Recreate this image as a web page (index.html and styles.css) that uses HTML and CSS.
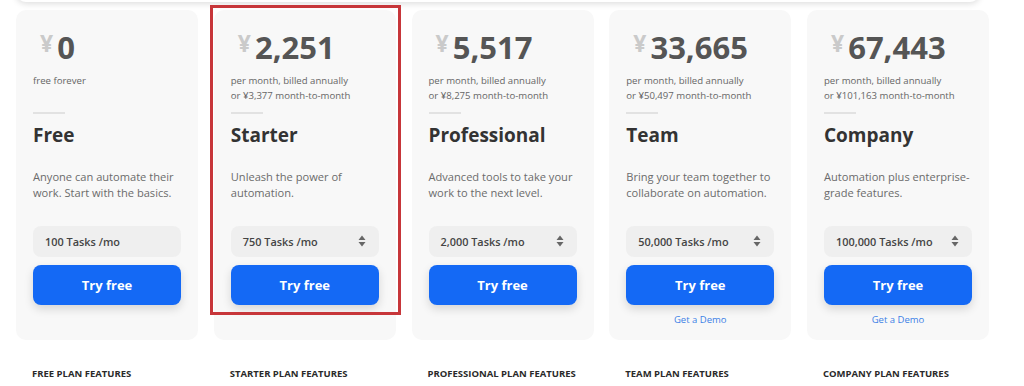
FILE: index.html
```html
<!DOCTYPE html>
<html lang="en">
<head>
<meta charset="utf-8">
<title>Pricing</title>
<link rel="stylesheet" href="styles.css">
</head>
<body>
<div class="top-strip"></div>
<div class="plans">
  <div class="card">
    <div class="price"><span class="cur">¥</span><span class="amt">0</span></div>
    <div class="sub">free forever</div>
    <div class="rule"></div>
    <h2 class="name">Free</h2>
    <p class="desc">Anyone can automate their work. Start with the basics.</p>
    <div class="select"><span>100 Tasks /mo</span></div>
    <a class="btn">Try free</a>
  </div>
  <div class="card highlighted">
    <div class="price"><span class="cur">¥</span><span class="amt">2,251</span></div>
    <div class="sub">per month, billed annually<br>or ¥3,377 month-to-month</div>
    <div class="rule"></div>
    <h2 class="name">Starter</h2>
    <p class="desc">Unleash the power of automation.</p>
    <div class="select"><span>750 Tasks /mo</span><svg class="arrows" width="8" height="12" viewBox="0 0 8 12"><path d="M4 0.5 L7.5 5 H0.5 Z M4 11.5 L7.5 7 H0.5 Z" fill="#666"/></svg></div>
    <a class="btn">Try free</a>
    <div class="outline"></div>
  </div>
  <div class="card">
    <div class="price"><span class="cur">¥</span><span class="amt">5,517</span></div>
    <div class="sub">per month, billed annually<br>or ¥8,275 month-to-month</div>
    <div class="rule"></div>
    <h2 class="name">Professional</h2>
    <p class="desc">Advanced tools to take your work to the next level.</p>
    <div class="select"><span>2,000 Tasks /mo</span><svg class="arrows" width="8" height="12" viewBox="0 0 8 12"><path d="M4 0.5 L7.5 5 H0.5 Z M4 11.5 L7.5 7 H0.5 Z" fill="#666"/></svg></div>
    <a class="btn">Try free</a>
  </div>
  <div class="card">
    <div class="price"><span class="cur">¥</span><span class="amt">33,665</span></div>
    <div class="sub">per month, billed annually<br>or ¥50,497 month-to-month</div>
    <div class="rule"></div>
    <h2 class="name">Team</h2>
    <p class="desc">Bring your team together to collaborate on automation.</p>
    <div class="select"><span>50,000 Tasks /mo</span><svg class="arrows" width="8" height="12" viewBox="0 0 8 12"><path d="M4 0.5 L7.5 5 H0.5 Z M4 11.5 L7.5 7 H0.5 Z" fill="#666"/></svg></div>
    <a class="btn">Try free</a>
    <a class="demo">Get a Demo</a>
  </div>
  <div class="card">
    <div class="price"><span class="cur">¥</span><span class="amt">67,443</span></div>
    <div class="sub">per month, billed annually<br>or ¥101,163 month-to-month</div>
    <div class="rule"></div>
    <h2 class="name">Company</h2>
    <p class="desc">Automation plus enterprise-grade features.</p>
    <div class="select"><span>100,000 Tasks /mo</span><svg class="arrows" width="8" height="12" viewBox="0 0 8 12"><path d="M4 0.5 L7.5 5 H0.5 Z M4 11.5 L7.5 7 H0.5 Z" fill="#666"/></svg></div>
    <a class="btn">Try free</a>
    <a class="demo">Get a Demo</a>
  </div>
</div>
<div class="features">
  <h3>Free plan features</h3>
  <h3>Starter plan features</h3>
  <h3>Professional plan features</h3>
  <h3>Team plan features</h3>
  <h3>Company plan features</h3>
</div>
</body>
</html>
```
FILE: styles.css
```css
* { box-sizing: border-box; }
html, body { margin: 0; padding: 0; background: #fff; }
body {
  font-family: "Open Sans", "Liberation Sans", sans-serif;
  color: #333;
  overflow: hidden;
}
.top-strip {
  height: 20px;
  margin: -18px 44px 0 16px;
  background: #fff;
  border-radius: 0 0 10px 10px;
  box-shadow: 0 2px 6px rgba(0, 0, 0, 0.13);
}
.plans {
  display: grid;
  grid-template-columns: repeat(5, 182px);
  column-gap: 15.75px;
  padding: 8px 0 0 16px;
}
.card {
  position: relative;
  display: flex;
  flex-direction: column;
  background: #f8f8f8;
  border-radius: 10px;
  padding: 19px 17px 13px 17px;
}
.price {
  display: flex;
  align-items: flex-start;
  height: 36px;
  line-height: 36px;
  margin-left: 7px;
}
.cur {
  font-size: 23px;
  font-weight: 700;
  color: #cacaca;
  line-height: 22px;
  margin-top: 3px;
  margin-right: 4px;
}
.amt {
  font-size: 31px;
  font-weight: 700;
  color: #555;
}
.sub {
  margin-top: 7.5px;
  height: 30px;
  font-size: 9.6px;
  line-height: 15px;
  color: #666;
}
.rule {
  width: 32px;
  height: 2px;
  background: #e2e2e2;
  margin-top: 9px;
}
.name {
  margin: 8.5px 0 0;
  font-size: 19px;
  line-height: 26px;
  font-weight: 700;
  color: #333;
}
.desc {
  margin: 21px 0 0;
  height: 32px;
  font-size: 11.1px;
  line-height: 16px;
  color: #6b6b6b;
}
.select {
  margin-top: 24.5px;
  height: 31px;
  border-radius: 8px;
  background: #efefef;
  display: flex;
  align-items: center;
  justify-content: space-between;
  padding: 0 13px 0 12px;
  font-size: 10.9px;
  font-weight: 600;
  color: #444;
}
.arrows { display: block; }
.btn {
  display: flex;
  align-items: center;
  justify-content: center;
  margin-top: 8px;
  height: 40px;
  border-radius: 8px;
  background: #1469f5;
  color: #fff;
  font-size: 13px;
  font-weight: 700;
  box-shadow: 0 4px 10px rgba(0, 0, 0, 0.14);
}
.demo {
  margin-top: 8px;
  text-align: center;
  font-size: 9.5px;
  line-height: 14px;
  color: #3c7fe6;
}
.outline {
  position: absolute;
  left: -4px;
  top: -5px;
  width: 191px;
  height: 310px;
  border: 3px solid #c7363a;
  pointer-events: none;
}
.features {
  display: grid;
  grid-template-columns: repeat(5, 182px);
  column-gap: 15.75px;
  padding: 0 0 0 16px;
  margin-top: 27px;
}
.features h3 {
  margin: 0;
  padding-left: 16px;
  font-size: 9.5px;
  line-height: 14px;
  font-weight: 700;
  text-transform: uppercase;
  color: #2a2a2a;
}
```
